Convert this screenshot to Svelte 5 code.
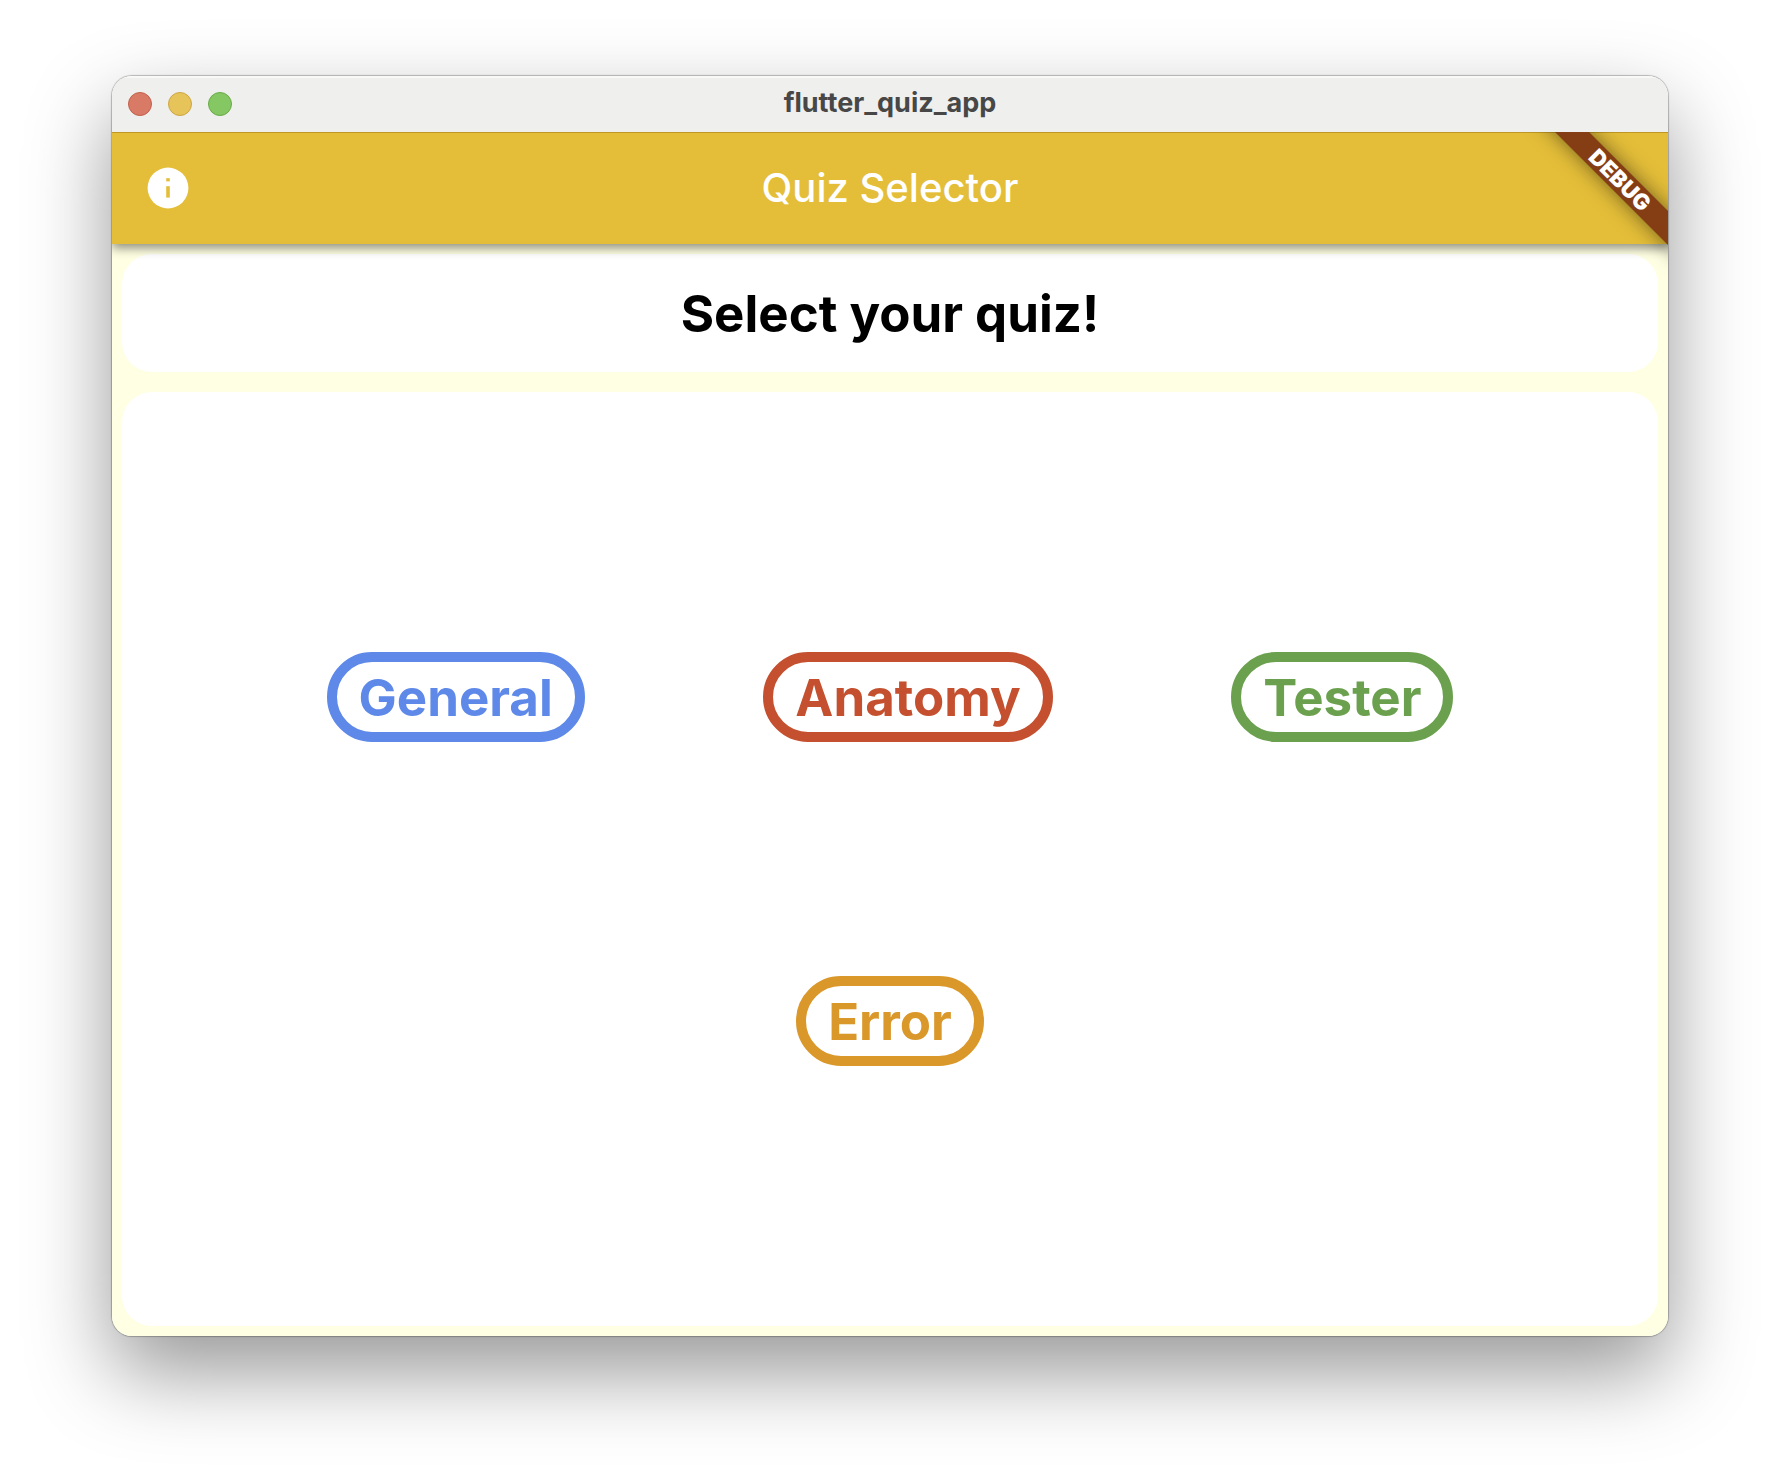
<script>
  const rows = [
    [
      { label: 'General', tone: 'blue' },
      { label: 'Anatomy', tone: 'red' },
      { label: 'Tester', tone: 'green' }
    ],
    [{ label: 'Error', tone: 'amber' }]
  ];
</script>

<div class="desktop">
  <div class="window">
    <header class="titlebar">
      <div class="lights">
        <button class="light close" aria-label="Close"></button>
        <button class="light minimize" aria-label="Minimize"></button>
        <button class="light zoom" aria-label="Zoom"></button>
      </div>
      <span class="window-title">flutter_quiz_app</span>
    </header>

    <div class="app">
      <div class="appbar">
        <button class="info" aria-label="About">
          <svg viewBox="0 0 48 48" width="48" height="48" aria-hidden="true">
            <circle cx="24" cy="24" r="20.4" fill="#fff" />
            <rect x="22.2" y="14.2" width="3.6" height="3.2" fill="#e4be39" />
            <rect x="22.2" y="22.2" width="3.6" height="11.4" fill="#e4be39" />
          </svg>
        </button>
        <h1>Quiz Selector</h1>
      </div>

      <main>
        <section class="card heading">
          <h2>Select your quiz!</h2>
        </section>
        <section class="card choices">
          {#each rows as row}
            <div class="row">
              {#each row as quiz}
                <button class="quiz {quiz.tone}">{quiz.label}</button>
              {/each}
            </div>
          {/each}
        </section>
      </main>

      <div class="ribbon">DEBUG</div>
    </div>
  </div>
</div>

<style>
  :global(body) {
    background: #fff;
  }
  .desktop {
    box-sizing: border-box;
    min-height: 100vh;
    padding: 76px 112px 148px;
    display: flex;
    overflow: hidden;
    font-family: Inter, 'Liberation Sans', sans-serif;
  }
  .window {
    flex: 1;
    display: flex;
    flex-direction: column;
    border-radius: 20px;
    overflow: hidden;
    box-shadow:
      0 0 1px 1px rgba(0, 0, 0, 0.25),
      0 36px 84px rgba(0, 0, 0, 0.41);
  }
  button {
    font: inherit;
    margin: 0;
    cursor: pointer;
  }
  .titlebar {
    display: grid;
    grid-template-columns: 1fr auto 1fr;
    align-items: center;
    height: 56px;
    background: #efefed;
    box-shadow: inset 0 2px 1px rgba(255, 255, 255, 0.6);
  }
  .lights {
    display: flex;
    gap: 16px;
    padding-left: 16px;
  }
  .light {
    width: 24px;
    height: 24px;
    padding: 0;
    border-radius: 50%;
    border: 1px solid;
  }
  .close {
    background: #d87a66;
    border-color: #c2604c;
  }
  .minimize {
    background: #e7c45a;
    border-color: #cda544;
  }
  .zoom {
    background: #85c762;
    border-color: #69ab48;
  }
  .window-title {
    padding-bottom: 2px;
    font-size: 27px;
    line-height: 32px;
    font-weight: 700;
    color: #474747;
  }
  .app {
    position: relative;
    flex: 1;
    display: flex;
    flex-direction: column;
    overflow: hidden;
    background: #ffffe3;
  }
  .appbar {
    z-index: 1;
    display: grid;
    grid-template-columns: 1fr auto 1fr;
    align-items: center;
    height: 112px;
    background: #e4be39;
    box-shadow:
      inset 0 1px 0 #bf9823,
      0 4px 10px rgba(0, 0, 0, 0.45);
  }
  .info {
    justify-self: start;
    display: flex;
    padding: 32px;
    border: 0;
    background: none;
  }
  h1,
  h2 {
    margin: 0;
  }
  h1 {
    font-size: 40px;
    line-height: 48px;
    font-weight: 550;
    color: #fff;
  }
  main {
    flex: 1;
    display: flex;
    flex-direction: column;
    gap: 20px;
    padding: 10px;
  }
  .card {
    background: #fff;
    border-radius: 30px;
  }
  .heading {
    padding: 30px 30px 28px;
    text-align: center;
  }
  h2 {
    font-size: 51px;
    line-height: 60px;
    font-weight: 700;
    color: #000;
  }
  .choices {
    flex: 1;
    display: flex;
    flex-direction: column;
    justify-content: space-evenly;
    padding: 26px;
  }
  .row {
    display: flex;
    justify-content: space-evenly;
  }
  .quiz {
    padding: 6px 22px 4px;
    border: 10px solid;
    border-radius: 45px;
    background: #fff;
    font-size: 51px;
    line-height: 60px;
    font-weight: 700;
  }
  .blue {
    color: #5e89e8;
  }
  .red {
    color: #c4502f;
  }
  .green {
    color: #6ba14e;
  }
  .amber {
    color: #da982b;
  }
  .ribbon {
    position: absolute;
    z-index: 2;
    top: 36px;
    right: -52px;
    width: 200px;
    height: 24px;
    transform: rotate(45deg);
    background: #853d14;
    box-shadow: 0 0 20px rgba(0, 0, 0, 0.5);
    color: #fff;
    font-size: 22px;
    line-height: 24px;
    font-weight: 900;
    text-align: center;
  }
</style>
